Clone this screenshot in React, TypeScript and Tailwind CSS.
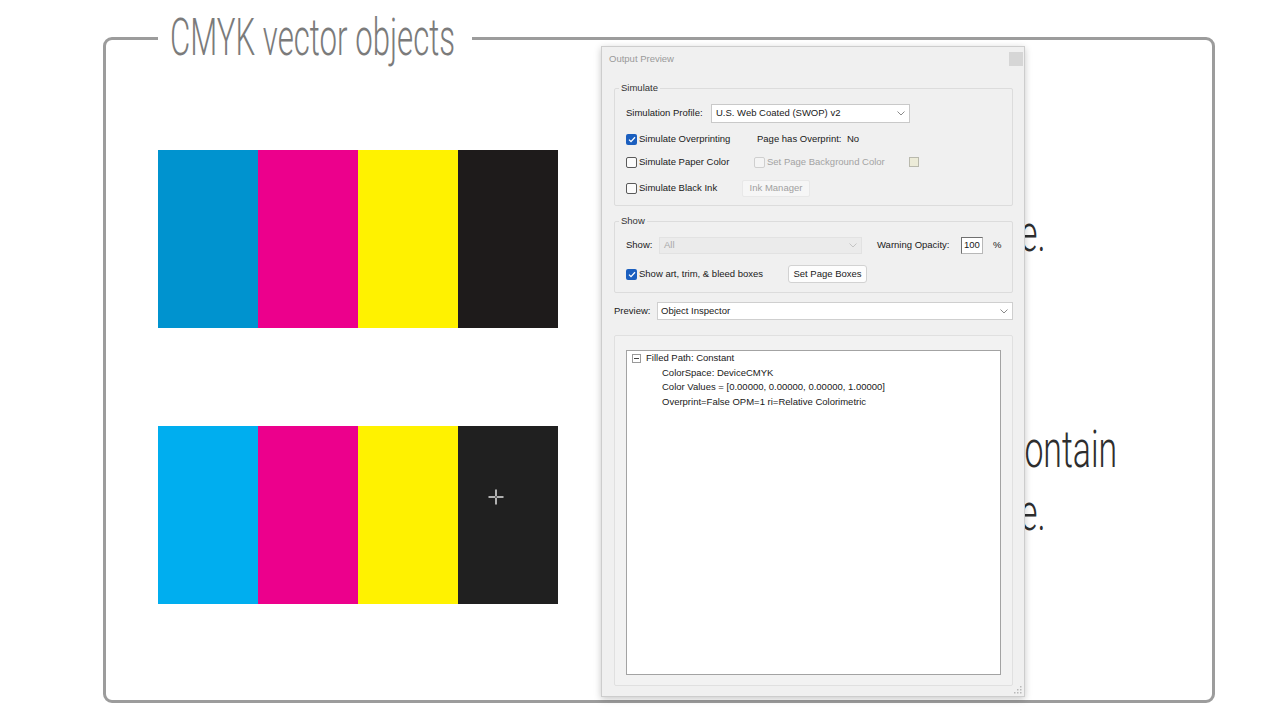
import React from "react";

const Chevron = ({ color = "#8a8a8a" }: { color?: string }) => (
  <svg width="8" height="5" viewBox="0 0 8 5" className="shrink-0">
    <polyline points="0.5,0.5 4,4 7.5,0.5" fill="none" stroke={color} strokeWidth="1" />
  </svg>
);

const Check = ({ checked = false, disabled = false }: { checked?: boolean; disabled?: boolean }) =>
  checked ? (
    <span className="w-[11px] h-[11px] rounded-[2px] bg-[#1b5fbf] flex items-center justify-center shrink-0">
      <svg width="8" height="7" viewBox="0 0 8 7">
        <polyline points="1,3.6 3,5.6 7,1.2" fill="none" stroke="#ffffff" strokeWidth="1.3" />
      </svg>
    </span>
  ) : (
    <span
      className={
        disabled
          ? "w-[11px] h-[11px] rounded-[2px] border border-[#cfcfcf] bg-[#f4f4f4] shrink-0"
          : "w-[11px] h-[11px] rounded-[2px] border border-[#5a5a5a] bg-[#fbfbfb] shrink-0"
      }
    />
  );

const Swatch = ({ color, children }: { color: string; children?: React.ReactNode }) => (
  <div className="relative w-[100px] h-[178px]" style={{ backgroundColor: color }}>
    {children}
  </div>
);

export default function App() {
  return (
    <div className="relative w-[1280px] h-[720px] overflow-hidden bg-white font-['Roboto',sans-serif]">
      <div className="pt-[12px] pl-[103px]">
        <fieldset className="w-[1112px] h-[691px] border-[3px] border-[#9c9c9c] rounded-[9px]">
          <legend className="ml-[52px] px-[12px] flex">
            <div className="w-[290px] h-[52px] text-[52px] leading-[52px] font-light text-[#7b7b7b] whitespace-nowrap">
              <span className="inline-block origin-left scale-x-[0.6]">CMYK vector objects</span>
            </div>
          </legend>
          <div className="flex">
            <div className="ml-[52px] mt-[86px] flex flex-col gap-[98px]">
              <div className="flex">
                <Swatch color="#0093cf" />
                <Swatch color="#ec008c" />
                <Swatch color="#fff200" />
                <Swatch color="#1e1b1b" />
              </div>
              <div className="flex">
                <Swatch color="#00aeef" />
                <Swatch color="#ec008c" />
                <Swatch color="#fff200" />
                <Swatch color="#202020">
                  <svg className="absolute left-[30px] top-[63px]" width="16" height="16" viewBox="0 0 16 16">
                    <line x1="8" y1="0.5" x2="8" y2="15.5" stroke="#d6d6d6" strokeWidth="1.6" />
                    <line x1="0.5" y1="8" x2="15.5" y2="8" stroke="#d6d6d6" strokeWidth="1.6" />
                    <rect x="7" y="7" width="2" height="2" fill="#6a6a6a" />
                  </svg>
                </Swatch>
              </div>
            </div>
            <div className="ml-[449px] mt-[138px] flex flex-col text-[52px] font-light text-[#2e2e2e] whitespace-nowrap">
              <div className="h-[63px] leading-[63px] pl-[13px]">
                <span className="inline-block origin-left scale-x-[0.65]">e.</span>
              </div>
              <div className="h-[63px] leading-[63px] mt-[153px]">
                <span className="inline-block origin-left scale-x-[0.65]">contain</span>
              </div>
              <div className="h-[63px] leading-[63px] pl-[13px]">
                <span className="inline-block origin-left scale-x-[0.65]">e.</span>
              </div>
            </div>
          </div>
        </fieldset>
      </div>

      {/* Output Preview dialog window */}
      <div className="absolute left-[601px] top-[46px] w-[424px] h-[651px] bg-[#f0f0f0] border border-[#cdcdcd] shadow-[0_2px_7px_rgba(0,0,0,0.22)] flex flex-col font-['Liberation_Sans',Arial,sans-serif] text-[9.5px] text-[#202020]">
        <div className="h-[23px] flex items-start justify-between shrink-0">
          <span className="pl-[7px] mt-[6px] text-[#9a9a9a] leading-[12px]">Output Preview</span>
          <span className="w-[14px] h-[14px] mt-[5px] mr-[1px] bg-[#d6d6d6]" />
        </div>

        <div className="pl-[12px] flex flex-col">
          {/* Simulate */}
          <fieldset className="mt-[12px] w-[399px] border border-[#dcdcdc] rounded-[2px] pb-[8px]">
            <legend className="ml-[4px] px-[2px] leading-[12px] text-[#333]">Simulate</legend>
            <div className="pl-[11px] flex flex-col">
              <div className="mt-[10px] h-[19px] flex items-center">
                <span className="w-[85px]">Simulation Profile:</span>
                <div className="w-[199px] h-[19px] bg-white border border-[#c9c9c9] flex items-center justify-between pl-[4px] pr-[4px]">
                  <span>U.S. Web Coated (SWOP) v2</span>
                  <Chevron />
                </div>
              </div>
              <div className="mt-[7px] h-[18px] flex items-center">
                <div className="w-[131px] flex items-center gap-[2px]">
                  <Check checked />
                  <span>Simulate Overprinting</span>
                </div>
                <span className="w-[90px]">Page has Overprint:</span>
                <span>No</span>
              </div>
              <div className="mt-[5px] h-[18px] flex items-center">
                <div className="w-[128px] flex items-center gap-[2px]">
                  <Check />
                  <span>Simulate Paper Color</span>
                </div>
                <div className="w-[155px] flex items-center gap-[2px] text-[#a3a3a3]">
                  <Check disabled />
                  <span>Set Page Background Color</span>
                </div>
                <span className="w-[10px] h-[10px] bg-[#ecebd8] border border-[#b9b9ad]" />
              </div>
              <div className="mt-[8px] h-[18px] flex items-center">
                <div className="w-[116px] flex items-center gap-[2px]">
                  <Check />
                  <span>Simulate Black Ink</span>
                </div>
                <div className="w-[68px] h-[17px] bg-[#f6f6f6] border border-[#e8e8e8] rounded-[2px] flex items-center justify-center text-[#a0a0a0]">
                  Ink Manager
                </div>
              </div>
            </div>
          </fieldset>

          {/* Show */}
          <fieldset className="mt-[9px] w-[399px] border border-[#dcdcdc] rounded-[2px] pb-[9px]">
            <legend className="ml-[4px] px-[2px] leading-[12px] text-[#333]">Show</legend>
            <div className="pl-[11px] flex flex-col">
              <div className="mt-[10px] h-[17px] flex items-center">
                <span className="w-[33px]">Show:</span>
                <div className="w-[203px] h-[17px] bg-[#ebebeb] border border-[#e2e2e2] flex items-center justify-between pl-[4px] pr-[4px] text-[#a8a8a8]">
                  <span>All</span>
                  <Chevron color="#c4c4c4" />
                </div>
                <span className="ml-[15px] w-[84px]">Warning Opacity:</span>
                <div className="w-[22px] h-[17px] bg-white border border-[#b8b8b8] border-t-[#707070] border-l-[#707070] flex items-center pl-[2px]">
                  100
                </div>
                <span className="ml-[10px]">%</span>
              </div>
              <div className="mt-[11px] h-[18px] flex items-center">
                <div className="w-[162px] flex items-center gap-[2px]">
                  <Check checked />
                  <span>Show art, trim, &amp; bleed boxes</span>
                </div>
                <div className="w-[79px] h-[18px] bg-[#fdfdfd] border border-[#d2d2d2] rounded-[3px] flex items-center justify-center">
                  Set Page Boxes
                </div>
              </div>
            </div>
          </fieldset>

          {/* Preview */}
          <div className="mt-[9px] h-[18px] flex items-center">
            <span className="w-[43px]">Preview:</span>
            <div className="w-[356px] h-[18px] bg-white border border-[#cfcfcf] flex items-center justify-between pl-[3px] pr-[4px]">
              <span>Object Inspector</span>
              <Chevron />
            </div>
          </div>

          {/* Inspector */}
          <div className="mt-[15px] w-[399px] border border-[#e0e0e0] bg-[#f2f2f2] rounded-[2px] px-[11px] pt-[14px] pb-[10px]">
            <div className="w-[375px] h-[325px] bg-white border border-[#a3a3a3] pl-[5px] flex flex-col leading-[14.6px]">
              <div className="h-[14.6px] flex items-center gap-[5px]">
                <span className="w-[9px] h-[9px] border border-[#9a9a9a] flex items-center justify-center">
                  <span className="w-[5px] h-px bg-[#444]" />
                </span>
                <span>Filled Path: Constant</span>
              </div>
              <div className="pl-[30px] flex flex-col">
                <span className="h-[14.6px]">ColorSpace: DeviceCMYK</span>
                <span className="h-[14.6px]">Color Values = [0.00000, 0.00000, 0.00000, 1.00000]</span>
                <span className="h-[14.6px]">Overprint=False OPM=1 ri=Relative Colorimetric</span>
              </div>
            </div>
          </div>
        </div>

        <svg className="absolute right-[2px] bottom-[2px]" width="8" height="8" viewBox="0 0 8 8">
          <rect x="6" y="0" width="1.5" height="1.5" fill="#b8b8b8" />
          <rect x="3" y="3" width="1.5" height="1.5" fill="#b8b8b8" />
          <rect x="6" y="3" width="1.5" height="1.5" fill="#b8b8b8" />
          <rect x="0" y="6" width="1.5" height="1.5" fill="#b8b8b8" />
          <rect x="3" y="6" width="1.5" height="1.5" fill="#b8b8b8" />
          <rect x="6" y="6" width="1.5" height="1.5" fill="#b8b8b8" />
        </svg>
      </div>
    </div>
  );
}
